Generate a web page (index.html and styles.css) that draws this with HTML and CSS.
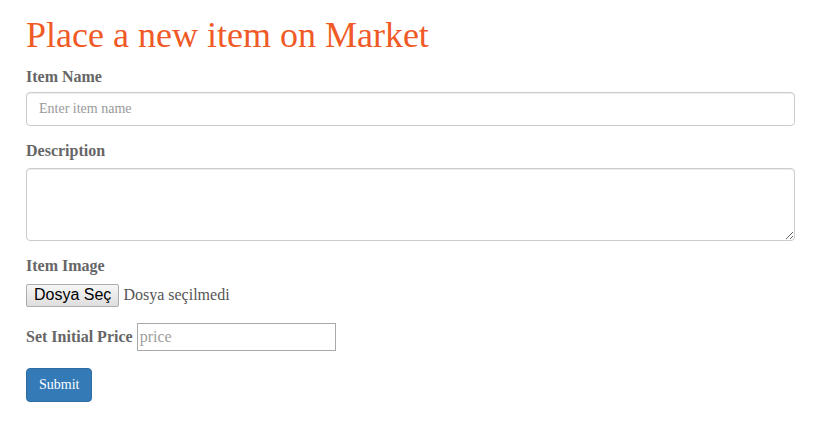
FILE: index.html
```html
<!DOCTYPE html>
<html lang="en">
<head>
<meta charset="utf-8">
<title>Place a new item on Market</title>
<link rel="stylesheet" href="styles.css">
</head>
<body>
<div class="container">
  <h1 class="title">Place a new item on Market</h1>
  <form class="form">
    <div class="form-group">
      <label class="label">Item Name</label>
      <input class="form-control" type="text" placeholder="Enter item name">
    </div>
    <div class="form-group">
      <label class="label">Description</label>
      <textarea class="form-control textarea"></textarea>
    </div>
    <div class="form-group">
      <label class="label">Item Image</label>
      <div class="file-row">
        <span class="file-btn">Dosya Seç</span>
        <span class="file-text">Dosya seçilmedi</span>
      </div>
    </div>
    <div class="form-group price-row">
      <label class="label inline">Set Initial Price</label>
      <input class="price-input" type="text" placeholder="price">
    </div>
    <button class="btn-primary" type="button">Submit</button>
  </form>
</div>
</body>
</html>
```

FILE: styles.css
```css
html, body {
  margin: 0;
  padding: 0;
  background: #fff;
}
body {
  font-family: "Liberation Serif", "Times New Roman", serif;
  font-size: 14px;
  line-height: 20px;
  color: #333;
}
.container {
  padding: 0 24px 0 26px;
}
.title {
  margin: 16px 0 11px;
  font-size: 36px;
  line-height: 39.6px;
  font-weight: normal;
  color: #f05a26;
}
.form-group {
  margin-bottom: 15px;
}
.label {
  display: inline-block;
  margin-bottom: 5px;
  font-size: 16px;
  line-height: 20px;
  font-weight: bold;
  color: #666;
}
.label.inline {
  margin-bottom: 0;
}
.form-control {
  display: block;
  box-sizing: border-box;
  width: 100%;
  height: 34px;
  padding: 6px 12px;
  font-family: "Liberation Serif", "Times New Roman", serif;
  font-size: 14px;
  line-height: 20px;
  color: #555;
  background: #fff;
  border: 1px solid #ccc;
  border-radius: 4px;
  box-shadow: inset 0 1px 1px rgba(0,0,0,.075);
  margin: 0;
}
.form-control::placeholder {
  color: #999;
}
.textarea {
  height: 73px;
  margin-top: 2px;
  resize: vertical;
}
.file-row {
  display: flex;
  align-items: center;
  gap: 4px;
  height: 23px;
  margin-top: 3px;
}
.file-btn {
  box-sizing: border-box;
  height: 23px;
  padding: 0 7px;
  display: inline-flex;
  align-items: center;
  font-family: "Liberation Sans", Arial, sans-serif;
  font-size: 16px;
  color: #000;
  border: 1px solid #adadad;
  border-radius: 2px;
  background: linear-gradient(#f6f6f6, #dedede);
}
.file-text {
  font-size: 16px;
  color: #555;
}
.price-row {
  display: flex;
  align-items: center;
  gap: 4px;
  margin-top: 16px;
  margin-bottom: 17px;
}
.price-input {
  box-sizing: border-box;
  width: 199px;
  height: 28px;
  margin: 0;
  padding: 1px 2px;
  font-family: "Liberation Serif", "Times New Roman", serif;
  font-size: 16px;
  border: 1px solid #a9a9a9;
  background: #fff;
}
.price-input::placeholder {
  color: #a0a0a0;
}
.btn-primary {
  display: inline-block;
  box-sizing: border-box;
  height: 34px;
  padding: 6px 12px;
  font-family: "Liberation Serif", "Times New Roman", serif;
  font-size: 14px;
  font-weight: normal;
  line-height: 20px;
  color: #fff;
  background: #337ab7;
  border: 1px solid #2e6da4;
  border-radius: 4px;
}
```
